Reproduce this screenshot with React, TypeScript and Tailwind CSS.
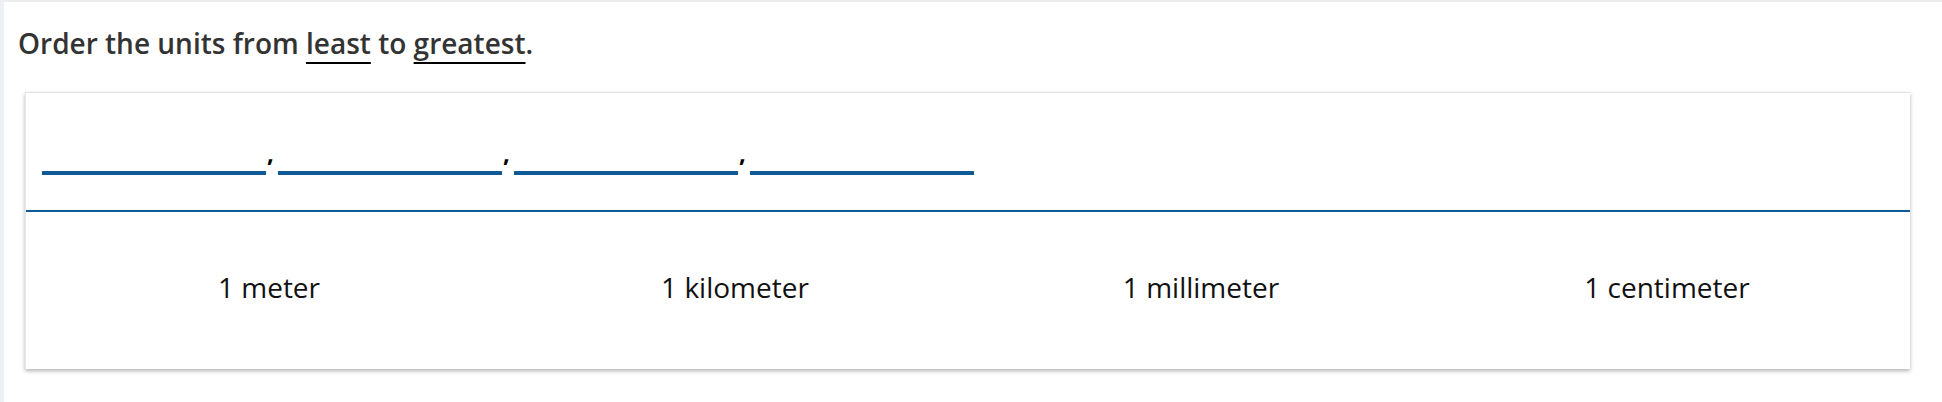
const units = ["1 meter", "1 kilometer", "1 millimeter", "1 centimeter"];

const Blank = () => <div className="w-[224px] h-[4px] bg-[#0f5a96]" />;

const Comma = () => (
  <span className="w-[12px] pl-[1px] mb-[10px] text-[24px] leading-none font-bold text-black">
    ,
  </span>
);

export default function App() {
  return (
    <div className="h-screen bg-white border-t-2 border-t-[#ececec] border-l-4 border-l-[#eef0f4] font-['Open_Sans',sans-serif]">
      {/* Question */}
      <p className="pl-[14px] pt-[22px] text-[28px] leading-[38px] font-semibold text-[#333333]">
        Order the units from{" "}
        <span className="underline decoration-2 decoration-black underline-offset-[8px]">
          least
        </span>{" "}
        to{" "}
        <span className="underline decoration-2 decoration-black underline-offset-[8px]">
          greatest
        </span>
        .
      </p>

      {/* Card */}
      <div className="mt-[30px] ml-[21px] mr-[32px] bg-white border-t border-t-[#e3e3e3] border-l border-l-[#e6e6e6] shadow-[0_2px_4px_rgba(0,0,0,0.3)]">
        {/* Answer blanks */}
        <div className="h-[117px] flex items-end pb-[35px] px-[16px]">
          <div className="flex items-end">
            <Blank />
            <Comma />
            <Blank />
            <Comma />
            <Blank />
            <Comma />
            <Blank />
          </div>
        </div>

        <div className="h-[2px] bg-[#0f5a96]" />

        {/* Draggable units */}
        <div className="grid grid-cols-4 px-[10px] pt-[56px] pb-[63px]">
          {units.map((u) => (
            <div key={u} className="text-center text-[28px] leading-[38px] text-[#111111]">
              {u}
            </div>
          ))}
        </div>
      </div>
    </div>
  );
}
